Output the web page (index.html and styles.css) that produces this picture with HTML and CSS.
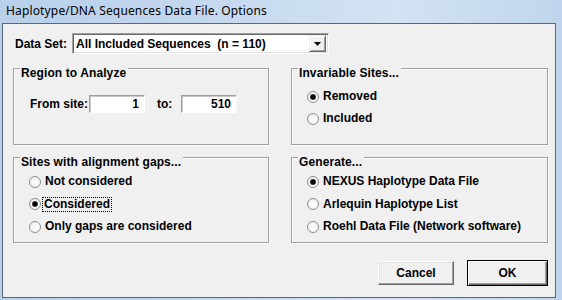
FILE: index.html
```html
<!DOCTYPE html>
<html>
<head>
<meta charset="utf-8">
<link rel="stylesheet" href="styles.css">
</head>
<body>
<div class="window">
  <div class="titlebar">Haplotype/DNA Sequences Data File. Options</div>
  <div class="client">
    <div class="dataset-row">
      <span class="lbl">Data Set:</span>
      <div class="combo">
        <span class="combo-text">All Included Sequences&nbsp; (n = 110)</span>
        <span class="combo-btn"><svg width="7" height="4" viewBox="0 0 7 4"><path d="M0 0h7L3.5 4z" fill="#000"/></svg></span>
      </div>
    </div>
    <div class="groups">
      <div class="group region">
        <span class="legend">Region to Analyze</span>
        <div class="range-row">
          <span class="lbl">From site:</span>
          <span class="field f1">1</span>
          <span class="lbl to">to:</span>
          <span class="field">510</span>
        </div>
      </div>
      <div class="group invariable">
        <span class="legend">Invariable Sites...</span>
        <div class="radios">
          <label class="radio"><span class="dot on"></span>Removed</label>
          <label class="radio"><span class="dot"></span>Included</label>
        </div>
      </div>
      <div class="group gaps">
        <span class="legend">Sites with alignment gaps...</span>
        <div class="radios">
          <label class="radio"><span class="dot"></span>Not considered</label>
          <label class="radio"><span class="dot on"></span><span class="focus">Considered</span></label>
          <label class="radio"><span class="dot"></span>Only gaps are considered</label>
        </div>
      </div>
      <div class="group generate">
        <span class="legend">Generate...</span>
        <div class="radios">
          <label class="radio"><span class="dot on"></span>NEXUS Haplotype Data File</label>
          <label class="radio"><span class="dot"></span>Arlequin Haplotype List</label>
          <label class="radio"><span class="dot"></span>Roehl Data File (Network software)</label>
        </div>
      </div>
    </div>
    <div class="buttons">
      <button class="btn cancel">Cancel</button>
      <button class="btn ok">OK</button>
    </div>
  </div>
</div>
</body>
</html>
```
FILE: styles.css
```css
* { box-sizing: border-box; }
html, body { margin: 0; padding: 0; }
body { width: 562px; height: 300px; overflow: hidden; background: #c6d9ef; }

.window {
  width: 562px;
  height: 300px;
  display: flex;
  flex-direction: column;
  background: linear-gradient(to right, #b8d0ea 0%, #c3d7ee 35%, #d3e3f4 70%, #c0d5ed 100%);
}

.titlebar {
  height: 23px;
  padding-left: 6px;
  font-family: "Noto Sans", "Open Sans", sans-serif;
  font-size: 12px;
  letter-spacing: 0.15px;
  line-height: 22px;
  color: #000;
}

.client {
  margin: 0 6px 2px 2px;
  flex: 1;
  border: 1px solid #5a6878;
  background: #f0f0f0;
  padding: 9px 7px 0 10px;
  font-family: "Liberation Sans", Arial, sans-serif;
  font-weight: bold;
  font-size: 12px;
  color: #000;
}

.dataset-row {
  display: flex;
  align-items: center;
  height: 21px;
  padding-left: 2px;
}
.dataset-row .lbl { width: 57px; }

.combo {
  width: 257px;
  height: 21px;
  background: #fff;
  border: 1px solid;
  border-color: #a0a0a0 #fff #fff #a0a0a0;
  box-shadow: inset 1px 1px #696969, inset -1px -1px #e3e3e3;
  display: flex;
  align-items: center;
  padding: 0 2px 0 3px;
}
.combo-text { flex: 1; }
.combo-btn {
  width: 17px;
  height: 17px;
  background: #f0f0f0;
  border: 1px solid;
  border-color: #f0f0f0 #696969 #696969 #f0f0f0;
  box-shadow: inset 1px 1px #fff, inset -1px -1px #a0a0a0;
  display: flex;
  align-items: center;
  justify-content: center;
}

.groups {
  margin-top: 14px;
  display: grid;
  grid-template-columns: 256px 257px;
  grid-template-rows: 77px 86px;
  column-gap: 22px;
  row-gap: 12px;
}

.group {
  border: 1px solid #a0a0a0;
  box-shadow: inset 1px 1px #fff, 1px 1px #fff;
  display: flex;
  flex-direction: column;
}

.legend {
  align-self: flex-start;
  margin: -2px 0 0 6px;
  padding: 0 2px 0 1px;
  background: #f0f0f0;
  line-height: 12px;
  height: 12px;
  letter-spacing: 0.1px;
}

.range-row {
  display: flex;
  align-items: center;
  margin-top: 16px;
  padding-left: 16px;
}
.range-row .lbl { width: 59px; }
.range-row .lbl.to { width: 24px; margin-left: 12px; }

.field {
  width: 56px;
  height: 18px;
  background: #fff;
  border: 1px solid;
  border-color: #a0a0a0 #fff #fff #a0a0a0;
  box-shadow: inset 1px 1px #c8c8c8;
  text-align: right;
  padding-right: 5px;
  line-height: 16px;
}

.radios {
  display: flex;
  flex-direction: column;
  padding-left: 15px;
}
.invariable .radios { margin-top: 11px; gap: 9px; }
.gaps .radios { margin-top: 7px; gap: 9.5px; }
.generate .radios { margin-top: 7px; gap: 9.5px; }

.radio {
  display: flex;
  align-items: center;
  height: 13px;
  line-height: 13px;
}

.dot {
  width: 12px;
  height: 12px;
  border-radius: 50%;
  border: 1px solid #8e8f8f;
  background: radial-gradient(circle at 60% 60%, #fff 0%, #f4f4f4 60%, #dcdcdc 100%);
  margin-right: 4px;
  flex: none;
  display: flex;
  align-items: center;
  justify-content: center;
}
.dot.on::after {
  content: "";
  width: 4px;
  height: 4px;
  border-radius: 50%;
  background: #000;
  box-shadow: 0 0 0 1px #333;
}

.focus {
  outline: 1px dotted #000;
  outline-offset: 0;
  padding: 0 1px;
  margin-left: -2px;
}

.buttons {
  display: flex;
  justify-content: flex-end;
  gap: 13px;
  margin-top: 18px;
}

.btn {
  font: inherit;
  color: #000;
  background: #f0f0f0;
  height: 24px;
  border: 1px solid;
  border-color: #fff #696969 #696969 #fff;
  box-shadow: inset -1px -1px #a0a0a0, inset 1px 1px #e3e3e3;
  padding: 0;
}
.cancel { width: 76px; }
.ok {
  width: 81px;
  height: 26px;
  border: 1px solid #000;
  box-shadow: inset 1px 1px #fff, inset -1px -1px #696969, inset -2px -2px #a0a0a0;
  margin-top: -1px;
}
```
